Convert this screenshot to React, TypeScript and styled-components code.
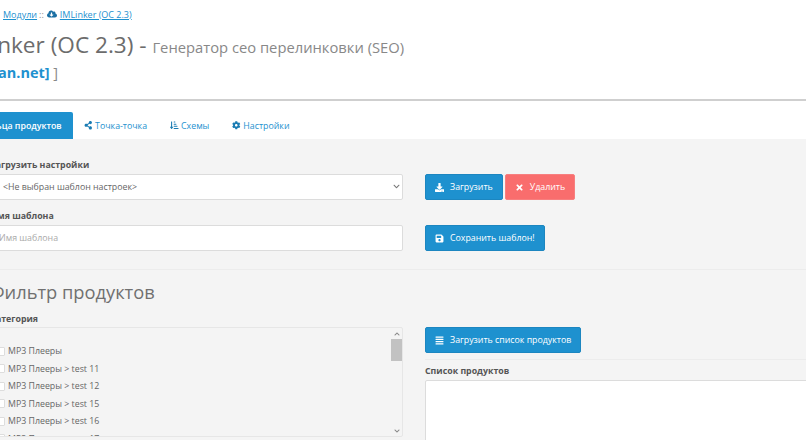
import React from "react";
import styled, { createGlobalStyle } from "styled-components";
import {
  FaAlignJustify,
  FaChevronDown,
  FaChevronUp,
  FaCloudDownloadAlt,
  FaCog,
  FaDownload,
  FaSave,
  FaShareAlt,
  FaSortAmountDownAlt,
  FaTimes,
} from "react-icons/fa";

const GlobalStyle = createGlobalStyle`
  html, body {
    margin: 0;
    padding: 0;
    overflow: hidden;
    width: 806px;
    height: 440px;
    background: #fff;
  }
  body {
    font-family: "Open Sans", "Noto Sans", sans-serif;
    font-size: 8.8px;
    color: #666;
  }
  * {
    box-sizing: border-box;
  }
`;

/* the page in the shot is scrolled sideways, so its left edge sits off screen */
const Page = styled.div`
  margin-left: -60px;
  width: 900px;
  height: 440px;
  overflow: hidden;
`;

const Header = styled.div`
  height: 101px;
  padding: 8px 0 0 13px;
  border-bottom: 2px solid #cfcfcf;
  background: #fff;
`;

const Crumbs = styled.div`
  display: flex;
  align-items: center;
  height: 12px;
  padding-left: 50px;
  gap: 2px;
  font-size: 9px;
  color: #888;
`;

const CrumbLink = styled.a`
  color: #1e91cf;
  text-decoration: underline;
  display: inline-flex;
  align-items: center;
`;

const CrumbIcon = styled.span`
  display: inline-flex;
  color: #1a6fa3;
  font-size: 10px;
  margin: 0 1px;
`;

const Title = styled.h1`
  margin: 10px 0 0;
  font-size: 22.6px;
  line-height: 29px;
  font-weight: 400;
  color: #6c6c6c;
  white-space: nowrap;
`;

const Subtitle = styled.small`
  font-size: 14.75px;
  color: #888;
`;

const Author = styled.div`
  margin-top: 1px;
  padding-left: 13px;
  font-size: 14.5px;
  line-height: 20px;
  color: #888;
  white-space: nowrap;

  b {
    color: #1e91cf;
  }
`;

const Tabs = styled.ul`
  display: flex;
  align-items: stretch;
  list-style: none;
  margin: 0;
  padding: 11px 0 0 29px;
  height: 38px;
  background: #fff;
`;

const Tab = styled.li<{ $active?: boolean }>`
  display: flex;
  align-items: center;
  gap: 2.5px;
  padding: 0 ${(p) => (p.$active ? "11px" : "11.5px")};
  border-radius: 2px 2px 0 0;
  font-size: 8.8px;
  font-weight: ${(p) => (p.$active ? 600 : 400)};
  background: ${(p) => (p.$active ? "#1e91cf" : "transparent")};
  color: ${(p) => (p.$active ? "#fff" : "#1e91cf")};
  white-space: nowrap;

  svg {
    font-size: 8.5px;
    color: #1a7cb3;
  }
`;

const Pane = styled.div`
  background: #f4f4f4;
  padding: 19px 0 0 50px;
  height: 301px;
`;

const Row = styled.div`
  display: grid;
  grid-template-columns: 413px 1fr;
  column-gap: 22px;
`;

const Field = styled.div`
  margin-bottom: 9px;
`;

const Label = styled.label`
  display: block;
  height: 16px;
  padding-top: 1px;
  line-height: 12px;
  font-size: 8.8px;
  font-weight: 700;
  color: #555;
  white-space: nowrap;
`;

const SelectWrap = styled.div`
  position: relative;
  height: 26px;
`;

const Select = styled.select`
  display: block;
  appearance: none;
  width: 100%;
  height: 26px;
  padding: 0 0 0 12px;
  border: 1px solid #dcdcdc;
  border-radius: 2px;
  background: #fff;
  font-family: inherit;
  font-size: 8.8px;
  color: #666;
`;

const SelectArrow = styled.span`
  position: absolute;
  right: 3px;
  top: 9px;
  display: flex;
  color: #777;
  font-size: 7px;
`;

const Input = styled.input`
  display: block;
  width: 100%;
  height: 26px;
  padding: 0 8px;
  border: 1px solid #dcdcdc;
  border-radius: 2px;
  background: #fff;
  font-family: inherit;
  font-size: 8.8px;

  &::placeholder {
    color: #aaa;
  }
`;

const Actions = styled.div`
  display: flex;
  gap: 2px;
  height: 26px;
  margin-top: 16px;
  margin-bottom: 9px;
`;

const ListActions = styled(Actions)`
  margin-top: 23px;
  margin-bottom: 0;
`;

const Button = styled.button<{ $danger?: boolean }>`
  display: inline-flex;
  align-items: center;
  gap: 6px;
  height: 26px;
  padding: 0 9px;
  border: 1px solid ${(p) => (p.$danger ? "#f77f7f" : "#1c86c0")};
  border-radius: 2px;
  background: ${(p) => (p.$danger ? "#f96d6d" : "#1e91cf")};
  color: #fff;
  font-family: inherit;
  font-size: 8.8px;
  white-space: nowrap;

  svg {
    font-size: 9px;
  }
`;

const Divider = styled.hr`
  margin: 9px 0 0;
  border: 0;
  border-top: 1px solid #ececec;
`;

const Heading = styled.h2`
  margin: 10px 0 0;
  font-size: 18.3px;
  line-height: 24px;
  font-weight: 400;
  color: #707070;
`;

const CategoryLabel = styled(Label)`
  margin-top: 8px;
  height: 15px;
`;

const CategoryBox = styled.div`
  display: flex;
  height: 110px;
  border: 1px solid #e6e6e6;
  border-radius: 2px;
  overflow: hidden;
`;

const CategoryList = styled.div`
  flex: 1;
  padding: 14.5px 0 0 3px;
  overflow: hidden;
`;

const CategoryRow = styled.div`
  display: flex;
  align-items: center;
  gap: 3px;
  height: 17.5px;
  font-size: 8.8px;
  color: #666;
  white-space: nowrap;
`;

const Check = styled.input.attrs({ type: "checkbox" })`
  appearance: none;
  width: 9px;
  height: 9px;
  margin: 0 0 0 2px;
  background: #fff;
  border: 1px solid #ddd;
  border-radius: 1px;
`;

const Track = styled.div`
  display: flex;
  flex-direction: column;
  align-items: center;
  flex: none;
  width: 11px;
  color: #888;
  font-size: 6px;
`;

const TrackEnd = styled.div`
  flex: none;
  height: 11px;
  display: flex;
  align-items: center;
`;

const Thumb = styled.div`
  width: 100%;
  height: 22px;
  margin-bottom: auto;
  background: #c2c2c2;
`;

const ProductDivider = styled.hr`
  margin: 6px 0 4px;
  border: 0;
  border-top: 1px solid #ececec;
`;

const TextArea = styled.textarea`
  display: block;
  width: 100%;
  height: 120px;
  border: 1px solid #dcdcdc;
  border-radius: 2px;
  background: #fff;
  resize: none;
`;

const categories = [
  "МР3 Плееры",
  "МР3 Плееры > test 11",
  "МР3 Плееры > test 12",
  "МР3 Плееры > test 15",
  "МР3 Плееры > test 16",
  "МР3 Плееры > test 17",
];

export default function App() {
  return (
    <Page>
      <GlobalStyle />
      <Header>
        <Crumbs>
          <CrumbLink>Модули</CrumbLink>
          <span>::</span>
          <CrumbIcon>
            <FaCloudDownloadAlt />
          </CrumbIcon>
          <CrumbLink>IMLinker (OC 2.3)</CrumbLink>
        </Crumbs>
        <Title>
          IMLinker (OC 2.3) - <Subtitle>Генератор сео перелинковки (SEO)</Subtitle>
        </Title>
        <Author>
          [ <b>[iman.net]</b> ]
        </Author>
      </Header>
      <Tabs>
        <Tab $active>Кольца продуктов</Tab>
        <Tab>
          <FaShareAlt />
          Точка-точка
        </Tab>
        <Tab>
          <FaSortAmountDownAlt />
          Схемы
        </Tab>
        <Tab>
          <FaCog />
          Настройки
        </Tab>
      </Tabs>
      <Pane>
        <Row>
          <Field>
            <Label>Загрузить настройки</Label>
            <SelectWrap>
              <Select defaultValue="">
                <option value="">{"<Не выбран шаблон настроек>"}</option>
              </Select>
              <SelectArrow>
                <FaChevronDown />
              </SelectArrow>
            </SelectWrap>
          </Field>
          <Actions>
            <Button>
              <FaDownload />
              Загрузить
            </Button>
            <Button $danger>
              <FaTimes />
              Удалить
            </Button>
          </Actions>
        </Row>
        <Row>
          <Field>
            <Label>Имя шаблона</Label>
            <Input placeholder="Имя шаблона" />
          </Field>
          <Actions>
            <Button>
              <FaSave />
              Сохранить шаблон!
            </Button>
          </Actions>
        </Row>
        <Divider />
        <Heading>Фильтр продуктов</Heading>
        <Row>
          <div>
            <CategoryLabel>Категория</CategoryLabel>
            <CategoryBox>
              <CategoryList>
                {categories.map((name) => (
                  <CategoryRow key={name}>
                    <Check />
                    {name}
                  </CategoryRow>
                ))}
              </CategoryList>
              <Track>
                <TrackEnd>
                  <FaChevronUp />
                </TrackEnd>
                <Thumb />
                <TrackEnd>
                  <FaChevronDown />
                </TrackEnd>
              </Track>
            </CategoryBox>
          </div>
          <div>
            <ListActions>
              <Button>
                <FaAlignJustify />
                Загрузить список продуктов
              </Button>
            </ListActions>
            <ProductDivider />
            <Label>Список продуктов</Label>
            <TextArea />
          </div>
        </Row>
      </Pane>
    </Page>
  );
}
